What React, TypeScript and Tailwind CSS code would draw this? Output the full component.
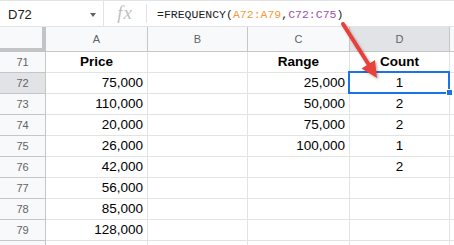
import React from "react";

const cols = ["A", "B", "C", "D"];
const colW = ["w-[102px]", "w-[100px]", "w-[102px]", "w-[100px]"];

type Cell = { t?: string; bold?: boolean; align?: "r" | "c" };
const rows: { n: number; cells: Cell[] }[] = [
  { n: 71, cells: [{ t: "Price", bold: true, align: "c" }, {}, { t: "Range", bold: true, align: "c" }, { t: "Count", bold: true, align: "c" }] },
  { n: 72, cells: [{ t: "75,000", align: "r" }, {}, { t: "25,000", align: "r" }, { t: "1", align: "c" }] },
  { n: 73, cells: [{ t: "110,000", align: "r" }, {}, { t: "50,000", align: "r" }, { t: "2", align: "c" }] },
  { n: 74, cells: [{ t: "20,000", align: "r" }, {}, { t: "75,000", align: "r" }, { t: "2", align: "c" }] },
  { n: 75, cells: [{ t: "26,000", align: "r" }, {}, { t: "100,000", align: "r" }, { t: "1", align: "c" }] },
  { n: 76, cells: [{ t: "42,000", align: "r" }, {}, {}, { t: "2", align: "c" }] },
  { n: 77, cells: [{ t: "56,000", align: "r" }, {}, {}, {}] },
  { n: 78, cells: [{ t: "85,000", align: "r" }, {}, {}, {}] },
  { n: 79, cells: [{ t: "128,000", align: "r" }, {}, {}, {}] },
  { n: 80, cells: [{}, {}, {}, {}] },
];

export default function App() {
  return (
    <div className="relative w-[454px] h-[245px] overflow-hidden bg-white font-['Liberation_Sans',Arial,sans-serif] text-black">
      {/* Formula bar */}
      <div className="flex h-[27px] items-center border-t border-b border-[#e1e3e6]">
        <div className="flex w-[104px] h-full items-center pl-[8px] pr-[7px] border-r border-[#e1e3e6] my-[4px]">
          <span className="text-[13px] leading-none text-[#202124] flex-1 pt-[1px]">D72</span>
          <span className="w-0 h-0 border-l-[3.5px] border-r-[3.5px] border-t-[4px] border-l-transparent border-r-transparent border-t-[#5f6368] mt-[2px]" />
        </div>
        <div className="flex w-[43px] h-[19px] items-center justify-center border-r border-[#e1e3e6]">
          <span className="font-['Liberation_Serif',serif] italic text-[19px] leading-none text-[#bdbfc2] tracking-[1px] -mt-[2px]">fx</span>
        </div>
        <div className="pl-[10px] pt-[2px] font-['Liberation_Mono',monospace] text-[11.5px] leading-none text-[#202124] whitespace-pre">
          =FREQUENCY(<span className="text-[#f29a38]">A72:A79</span>,<span className="text-[#9852ad]">C72:C75</span>)
        </div>
      </div>

      {/* Column header row */}
      <div className="flex h-[25px]">
        <div className="w-[46px] h-full bg-[#f8f9fa] border-r-[4px] border-b-[4px] border-[#c2c4c7]" />
        {cols.map((c, i) => (
          <div
            key={c}
            className={`${colW[i]} h-full flex items-center justify-center border-r border-b border-[#c4c7c5] text-[11px] text-[#5f6368] ${c === "D" ? "bg-[#e1e3e6]" : "bg-[#f8f9fa]"}`}
          >
            {c}
          </div>
        ))}
        <div className="flex-1 h-full bg-[#f8f9fa] border-b border-[#c4c7c5]" />
      </div>

      {/* Rows */}
      {rows.map((r) => (
        <div key={r.n} className="flex h-[21px]">
          <div
            className={`w-[46px] h-full flex items-center justify-center border-r border-b border-[#c4c7c5] text-[11px] text-[#5f6368] ${r.n === 72 ? "bg-[#e1e3e6]" : "bg-[#f8f9fa]"}`}
          >
            {r.n < 80 ? r.n : ""}
          </div>
          {r.cells.map((c, i) => (
            <div
              key={i}
              className={`${colW[i]} h-full flex items-center border-r border-b border-[#e2e3e3] text-[13.5px] leading-none px-[4px] ${c.align === "c" ? "justify-center" : "justify-end"} ${c.bold ? "font-bold" : ""}`}
            >
              {c.t}
            </div>
          ))}
          <div className="flex-1 h-full border-b border-[#e2e3e3]" />
        </div>
      ))}

      {/* Selection on D72 */}
      <div className="absolute left-[348px] top-[71px] w-[102px] h-[23px] border-2 border-[#1a73e8] pointer-events-none" />
      <div className="absolute left-[446px] top-[89px] w-[7px] h-[7px] bg-[#1a73e8] border border-white" />

      {/* Red arrow */}
      <svg className="absolute left-0 top-0 pointer-events-none" width="454" height="245" viewBox="0 0 454 245">
        <defs>
          <filter id="sh" x="-20%" y="-20%" width="140%" height="140%">
            <feDropShadow dx="1.5" dy="1.5" stdDeviation="1.2" floodColor="#000" floodOpacity="0.3" />
          </filter>
        </defs>
        <g filter="url(#sh)">
          <line x1="343" y1="24" x2="369" y2="65" stroke="#e8403a" strokeWidth="4" strokeLinecap="round" />
          <polygon points="377,78 361.5,68.5 375,60" fill="#e8403a" />
        </g>
      </svg>
    </div>
  );
}
